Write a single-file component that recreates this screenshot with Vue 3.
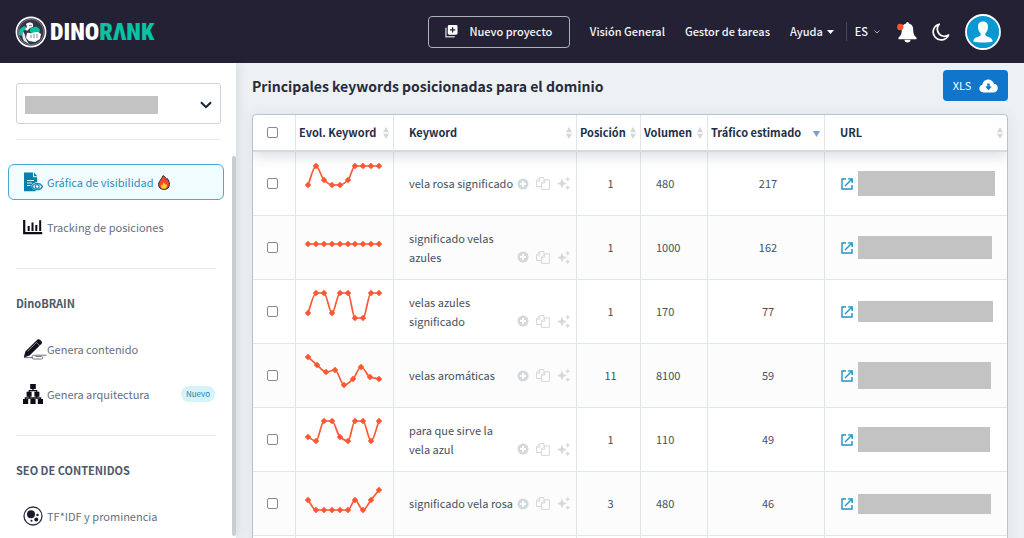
<script setup>
import { ref } from 'vue'

const project = ref('')
const allSelected = ref(false)

const tenSteps = [0, 8, 16, 24, 32, 40, 47, 55, 63, 71]
const nineSteps = [0, 9, 18, 27, 36, 45, 53, 62, 71]

const columns = [
  { key: 'evol', label: 'Evol. Keyword' },
  { key: 'keyword', label: 'Keyword' },
  { key: 'pos', label: 'Posición' },
  { key: 'vol', label: 'Volumen' },
  { key: 'traffic', label: 'Tráfico estimado', sorted: true },
  { key: 'url', label: 'URL' },
]

const rows = [
  { keyword: 'vela rosa significado', pos: 1, vol: 480, traffic: 217, trend: [33, 14, 28, 33, 33, 28, 14, 14, 14, 14], bar: [137, 25] },
  { keyword: 'significado velas azules', pos: 1, vol: 1000, traffic: 162, trend: [28, 28, 28, 28, 28, 28, 28, 28, 28, 28], bar: [134, 23] },
  { keyword: 'velas azules significado', pos: 1, vol: 170, traffic: 77, trend: [33, 13, 13, 33, 13, 13, 38, 38, 13, 13], bar: [135, 21] },
  { keyword: 'velas aromáticas', pos: 11, vol: 8100, traffic: 59, trend: [13, 21, 28, 26, 41, 35, 23, 33, 35], bar: [133, 27] },
  { keyword: 'para que sirve la vela azul', pos: 1, vol: 110, traffic: 49, trend: [29, 33, 13, 13, 29, 33, 13, 13, 33, 13], bar: [132, 25] },
  { keyword: 'significado vela rosa', pos: 3, vol: 480, traffic: 46, trend: [28, 38, 38, 38, 38, 38, 28, 38, 28, 18], bar: [133, 20] },
].map((row) => {
  const xs = row.trend.length === 10 ? tenSteps : nineSteps
  return { ...row, points: row.trend.map((y, i) => ({ x: xs[i] + 12, y })) }
})

// Monotone cubic interpolation, so the curve never overshoots its points.
function curve(p) {
  const slope = (i) => (p[i + 1].y - p[i].y) / (p[i + 1].x - p[i].x)
  const tangent = (i) => {
    if (i === 0) return slope(0)
    if (i === p.length - 1) return slope(i - 1)
    const a = slope(i - 1)
    const b = slope(i)
    return a * b <= 0 ? 0 : (2 * a * b) / (a + b)
  }
  let d = `M${p[0].x} ${p[0].y}`
  for (let i = 0; i < p.length - 1; i++) {
    const h = (p[i + 1].x - p[i].x) / 3
    d += `C${p[i].x + h} ${p[i].y + tangent(i) * h} ${p[i + 1].x - h} ${p[i + 1].y - tangent(i + 1) * h} ${p[i + 1].x} ${p[i + 1].y}`
  }
  return d
}

const diamonds = (p) => p.map(({ x, y }) => `M${x - 3} ${y}L${x} ${y - 3}L${x + 3} ${y}L${x} ${y + 3}Z`).join('')
</script>

<template>
  <div class="page">
    <header class="topbar">
      <a class="brand" href="#" aria-label="DinoRank">
        <svg class="brand-mark" viewBox="0 0 32 32" aria-hidden="true">
          <circle cx="16" cy="16" r="14.6" fill="#343447" stroke="#fff" stroke-width="1.6" />
          <circle cx="16" cy="16" r="12.800" fill="none" stroke="#8d919c" stroke-width=".7" />
          <path d="M4 19c-1-5 2-8 6-9l2 3-4 2-1 5z" fill="#09c2a2" />
          <path d="M15 13c2-2 3-1 4-2 3-1 5 1 6 3l-1 3-6 1-3-2z" fill="#09c2a2" />
          <path d="M11 8c2-2 6-2 7 0v3l-3 1-3 3-2-2 2-2z" fill="#f3f5f6" />
          <path d="M12 17c2-1 3 1 5 0s4-1 6-1l3 2-1 5-5 3-6-1-3-3z" fill="#fff" />
          <path d="M8 15c-1 4-1 7 1 10l5 3c-2-3-4-6-4-9z" fill="#e4e8ea" />
          <path d="M16 19v3m3-4v4m3-4v4M14 9.500h3" stroke="#6a6c7a" stroke-width=".8" fill="none" />
        </svg>
        <span class="brand-name">DINO<span class="brand-accent">RΛNK</span></span>
      </a>

      <nav class="topnav" aria-label="Principal">
        <button class="new-project" type="button">
          <svg width="13" height="13" viewBox="0 0 14 14" aria-hidden="true">
            <path d="M1 3v9.600h9.500" fill="none" stroke="#b9c0c8" stroke-width="1.600" />
            <rect x="3" y="0" width="10.500" height="10.500" rx="1.500" fill="#fff" />
            <path d="M8.200 2.400v5.800M5.300 5.300h5.800" stroke="#232133" stroke-width="1.400" />
          </svg>
          Nuevo proyecto
        </button>
        <a href="#">Visión General</a>
        <a href="#">Gestor de tareas</a>
        <a class="help" href="#">Ayuda
          <svg width="7" height="4" viewBox="0 0 7 4" aria-hidden="true"><path d="M0 0h7L3.500 4z" fill="#fff" /></svg>
        </a>
      </nav>

      <button class="lang" type="button">ES
        <svg width="6" height="4" viewBox="0 0 6 4" aria-hidden="true"><path d="M.5.500 3 3 5.500.500" fill="none" stroke="#a9b1bb" /></svg>
      </button>
      <button class="icon-btn" type="button" aria-label="Notificaciones">
        <svg width="20" height="22" viewBox="0 0 20 22" aria-hidden="true">
          <path d="M10.500 1c.8 0 1.300.6 1.300 1.400 3 .7 4.400 3 4.400 5.800 0 4.300.8 6.200 3.300 8.400v1.600H1.500v-1.600c2.500-2.200 3.300-4.100 3.300-8.400 0-2.800 1.400-5.100 4.400-5.800C9.200 1.600 9.700 1 10.500 1z" fill="#fff" />
          <path d="M7.500 18.800h6a3 2.600 0 0 1-6 0z" fill="#fff" />
          <circle cx="3.300" cy="6" r="3.200" fill="#ff5630" />
        </svg>
      </button>
      <button class="icon-btn moon" type="button" aria-label="Modo oscuro">
        <svg width="18" height="18" viewBox="0 0 18 18" aria-hidden="true">
          <path d="M7.200 1.200A8 8 0 1 0 16.600 12 7.200 7.200 0 0 1 7.200 1.200z" fill="none" stroke="#fff" stroke-width="1.700" stroke-linejoin="round" />
        </svg>
      </button>
      <button class="icon-btn" type="button" aria-label="Perfil">
        <svg width="36" height="36" viewBox="0 0 36 36" aria-hidden="true">
          <circle cx="18" cy="18" r="17" fill="#0699d2" stroke="#fff" stroke-width="1.800" />
          <path d="M18 7.500c3.600 0 5.200 2.300 5 5.800-.1 2.600-1.200 4.700-2.600 6v2c.6 1.600 7 1.400 7.300 6.200-5 1.400-14.400 1.400-19.400 0 .3-4.800 6.700-4.600 7.300-6.200v-2c-1.400-1.300-2.500-3.400-2.600-6-.2-3.500 1.400-5.800 5-5.800z" fill="#fff" />
        </svg>
      </button>
    </header>

    <div class="body">
      <aside class="sidebar">
        <div class="project">
          <select v-model="project" aria-label="Proyecto"><option value=""></option></select>
          <span class="project-mask"></span>
          <svg class="project-caret" width="12" height="8" viewBox="0 0 12 8" aria-hidden="true">
            <path d="M1 1.200l5 5 5-5" fill="none" stroke="#14213a" stroke-width="2" />
          </svg>
        </div>
        <hr class="rule wide" />
        <div class="menu">
          <a class="item active" href="#">
            <svg width="20" height="20" viewBox="0 0 20 20" aria-hidden="true">
              <path d="M1 .5h9v4.800h4.200V10c-3 .2-5 1.800-6 4.300.7 2 2.400 3.600 4.600 4.200v.7H1z" fill="#0b7fa8" />
              <path d="M11 .5l3.300 3.800H11z" fill="#0b7fa8" />
              <path d="M4 8.500h7M4 11h5M4 13.500h3.500" stroke="#d7f1fa" stroke-width="1.100" />
              <path d="M9 14.600c2.400-4.200 8-4.200 10.500 0-2.500 4.200-8.100 4.200-10.500 0z" fill="#f0fbff" stroke="#2187b5" stroke-width="1.200" />
              <circle cx="14.200" cy="14.600" r="1.900" fill="#f0fbff" stroke="#2187b5" stroke-width="1.200" />
            </svg>
            <span>Gráfica de visibilidad</span>
            <svg class="fire" width="12" height="15" viewBox="0 0 12 15" aria-hidden="true">
              <path d="M5 .7C7.500 1.500 8 3.300 8.300 4.500l.9-1c1.400 1.600 2.200 4 2.200 6 0 3-2 4.900-5.400 4.900S.6 12.500.6 9.500c0-2.700 1.800-4 2.700-5.600C3.900 2.900 4.600 2 5 .7z" fill="#f4472c" stroke="#2f2430" />
              <path d="M5.600 7c.3 1.500 1.600 1.700 1.900 2.800l1-.8c.9 2.600-.2 4.800-2.500 4.800-2.600 0-3.600-2.300-2.400-4.400l.8.8c.2-1.200.8-2 1.200-3.200z" fill="#ffd21f" />
            </svg>
          </a>
          <a class="item" href="#">
            <svg width="20" height="20" viewBox="0 0 20 20" aria-hidden="true">
              <path d="M1.200 3v13.200h18" fill="none" stroke="#0d0d18" stroke-width="2.200" />
              <path d="M5.700 9v5M9.500 5.500V14M13.300 8v6M17.200 3.200V14" stroke="#0d0d18" stroke-width="2" />
            </svg>
            <span>Tracking de posiciones</span>
          </a>
        </div>
        <hr class="rule" />
        <h2>DinoBRAIN</h2>
        <div class="menu">
          <a class="item" href="#">
            <svg class="pencil" width="24" height="22" viewBox="0 0 24 22" aria-hidden="true">
              <path d="M.8 19.500l1.500-6L14.500 1.600c1.500-1.500 5.600 2 4.300 4L6.600 17.500z" fill="#11111c" />
              <path d="M13 4l4 4M4.500 13.500l8.500-8.600" stroke="#aeb4c0" stroke-width=".7" />
              <path d="M1 19.600h9M10.500 17.200H23.500M10.500 17.200c-2 0-2 3.800 0 3.800h8c1.800 0 1.800-2.500 0-2.500h-6" fill="none" stroke="#5d6470" stroke-width=".9" />
            </svg>
            <span>Genera contenido</span>
          </a>
          <a class="item" href="#">
            <svg width="20" height="20" viewBox="0 0 20 20" aria-hidden="true">
              <path d="M7.200 0h5.600v5H7.200zM3.600 7.800h5v5h-5zM11.400 7.800h5v5h-5zM0 15h5.200v5H0zM7.400 15h5.200v5H7.400zM14.800 15H20v5h-5.200z" fill="#0d0d18" />
              <path d="M10 4.500v2.200M6.300 8.500V6.700h7.400v1.800M6.300 12v2M2.400 16v-2h15.200v2M13.700 12v2M10 14v2" fill="none" stroke="#0d0d18" stroke-width="1.300" />
            </svg>
            <span>Genera arquitectura</span>
            <span class="badge">Nuevo</span>
          </a>
        </div>
        <hr class="rule" />
        <h2>SEO DE CONTENIDOS</h2>
        <div class="menu">
          <a class="item" href="#">
            <svg width="20" height="20" viewBox="0 0 20 20" aria-hidden="true">
              <circle cx="10" cy="10" r="9" fill="none" stroke="#2b3348" stroke-width="1.300" />
              <circle cx="8" cy="8.300" r="4" fill="#1b1b2c" />
              <circle cx="14.500" cy="9" r="1.200" fill="#1b1b2c" />
              <circle cx="13.300" cy="13.500" r="2" fill="#1b1b2c" />
              <circle cx="8.500" cy="14.800" r="1" fill="#1b1b2c" />
            </svg>
            <span>TF*IDF y prominencia</span>
          </a>
        </div>
        <span class="scroll-thumb"></span>
      </aside>

      <main class="content">
        <div class="title-row">
          <h1>Principales keywords posicionadas para el dominio</h1>
          <button class="xls" type="button">XLS
            <svg width="19" height="14" viewBox="0 0 19 14" aria-hidden="true">
              <path d="M4.600 13.500C2 13.500.3 11.800.3 9.600c0-2 1.300-3.500 3.100-3.900C3.700 2.700 6.200.5 9.200.5c2.700 0 5 1.700 5.800 4.200 2.200.2 3.800 2 3.800 4.300 0 2.500-2 4.500-4.500 4.500z" fill="#fff" />
              <path d="M8.300 4.500h2.400v3h2.100l-3.300 3.700-3.300-3.700h2.100z" fill="#1076cc" />
            </svg>
          </button>
        </div>

        <div class="table-card">
          <table>
            <colgroup>
              <col class="c-check" /><col class="c-evol" /><col class="c-keyword" /><col class="c-pos" />
              <col class="c-vol" /><col class="c-traffic" /><col />
            </colgroup>
            <thead>
              <tr>
                <th class="check"><input v-model="allSelected" type="checkbox" aria-label="Seleccionar todo" /></th>
                <th v-for="col in columns" :key="col.key" :class="col.key">
                  <div class="th">
                    <span>{{ col.label }}</span>
                    <svg v-if="col.sorted" class="sorted" width="7" height="6" viewBox="0 0 7 6" aria-hidden="true"><path d="M0 0h7L3.500 6z" fill="#7c9ccb" /></svg>
                    <svg v-else width="6" height="12" viewBox="0 0 6 12" aria-hidden="true"><path d="M0 5.300h6L3 0zM0 6.700h6L3 12z" fill="#d3d6da" /></svg>
                  </div>
                </th>
              </tr>
            </thead>
            <tbody>
              <tr v-for="row in rows" :key="row.keyword">
                <td class="check"><input type="checkbox" :checked="allSelected" :aria-label="row.keyword" /></td>
                <td class="evol">
                  <svg width="96" height="56" viewBox="0 0 96 56" aria-hidden="true">
                    <path :d="curve(row.points)" fill="none" stroke="#ff5733" stroke-width="1.700" />
                    <path :d="diamonds(row.points)" fill="#ff5733" stroke="#ff5733" stroke-width=".5" />
                  </svg>
                </td>
                <td class="keyword">
                  <div class="kw">
                    <span class="kw-text">{{ row.keyword }}</span>
                    <button type="button" aria-label="Añadir">
                      <svg width="12" height="12" viewBox="0 0 12 12" aria-hidden="true">
                        <circle cx="6" cy="6" r="5.500" fill="#d3d8dd" /><path d="M6 3v6M3 6h6" stroke="#fff" stroke-width="1.800" />
                      </svg>
                    </button>
                    <button type="button" aria-label="Copiar">
                      <svg width="14" height="13" viewBox="0 0 14 13" aria-hidden="true">
                        <path d="M5.500 9.500h-5V4L3.700.6h4.200V3M.5 4h3.200V.6" fill="none" stroke="#d3d8dd" />
                        <path d="M5.600 6L8.800 2.800h4.600v9.600H5.600zM5.600 6h3.200V2.800" fill="none" stroke="#d3d8dd" />
                      </svg>
                    </button>
                    <button type="button" aria-label="Sugerencias">
                      <svg width="13" height="13" viewBox="0 0 13 13" aria-hidden="true">
                        <path d="M5 2l1.300 3.200L9.500 6.500 6.300 7.800 5 11 3.700 7.800.5 6.500l3.200-1.300zM10.700 0l.6 1.600 1.600.6-1.600.6-.6 1.600-.6-1.600-1.600-.6 1.600-.6zM10.700 8.500l.6 1.600 1.600.6-1.600.6-.6 1.600-.6-1.600-1.600-.6 1.600-.6z" fill="#d3d8dd" stroke="#d3d8dd" stroke-width=".4" />
                      </svg>
                    </button>
                  </div>
                </td>
                <td class="pos">{{ row.pos }}</td>
                <td class="vol">{{ row.vol }}</td>
                <td class="traffic">{{ row.traffic }}</td>
                <td class="url">
                  <a class="link" href="#" aria-label="Abrir URL">
                    <svg width="12" height="12" viewBox="0 0 12 12" aria-hidden="true">
                      <path d="M5 1H1v10h10V7" fill="none" stroke="#2590c8" stroke-width="1.400" />
                      <path d="M7 .9h4.200V5M11 1L4 8" fill="none" stroke="#2590c8" stroke-width="1.400" />
                    </svg>
                    <span class="mask" :style="{ width: row.bar[0] + 'px', height: row.bar[1] + 'px' }"></span>
                  </a>
                </td>
              </tr>
              <tr aria-hidden="true"><td v-for="n in 7" :key="n"></td></tr>
            </tbody>
          </table>
        </div>
      </main>
    </div>
  </div>
</template>

<style>
body {
  background: #edf1f4;
}
</style>

<style scoped>
.page {
  height: 100vh;
  overflow: hidden;
  display: flex;
  flex-direction: column;
  font: 400 11px/19px "Noto Sans CJK SC", "Open Sans", sans-serif;
  color: #46505f;
}
* {
  box-sizing: border-box;
}
a {
  color: inherit;
  text-decoration: none;
}
button {
  font: inherit;
  color: inherit;
  background: none;
  border: 0;
  padding: 0;
  cursor: pointer;
}
svg {
  display: block;
  flex: none;
}
.topbar {
  flex: none;
  height: 63px;
  background: #232133;
  color: #f3f5f7;
  display: flex;
  align-items: center;
  padding: 0 23px 0 15px;
  font-weight: 500;
  white-space: nowrap;
}
.brand {
  display: flex;
  align-items: center;
  gap: 3px;
  margin-right: auto;
}
.brand-mark {
  width: 32px;
  height: 32px;
}
.brand-name {
  font: 900 24px/32px "Roboto Condensed", Roboto, sans-serif;
  color: #fff;
}
.brand-accent {
  color: #09c2a2;
}
.topnav {
  display: flex;
  align-items: center;
  gap: 20px;
}
.new-project {
  display: flex;
  align-items: center;
  justify-content: center;
  gap: 11px;
  width: 142px;
  height: 32px;
  border: 1px solid #aab1b9;
  border-radius: 4px;
}
.help,
.lang {
  display: flex;
  align-items: center;
  gap: 4px;
}
.lang {
  gap: 6px;
  margin: 0 17px 0 12px;
  padding-left: 8px;
  border-left: 1px solid #454557;
}
.moon {
  margin: 0 15px;
}
.body {
  flex: 1;
  min-height: 0;
  display: flex;
}
.sidebar {
  position: relative;
  flex: none;
  width: 236px;
  padding: 20px 16px 0;
  background: #fff;
  box-shadow: 2px 0 10px rgba(40, 60, 80, 0.12);
  color: #667080;
}
.project {
  position: relative;
  width: 205px;
}
.project select {
  display: block;
  width: 100%;
  height: 41px;
  appearance: none;
  background: #fff;
  border: 1px solid #ccd3d8;
  border-radius: 3px;
}
.project-mask {
  position: absolute;
  left: 9px;
  top: 13px;
  width: 133px;
  height: 18px;
  background: #c3c3c3;
  pointer-events: none;
}
.project-caret {
  position: absolute;
  right: 9px;
  top: 18px;
  pointer-events: none;
}
.rule {
  height: 1px;
  margin: 23px 4px 24px 0;
  border: 0;
  background: #e3e7ea;
}
.rule.wide {
  margin: 15px 0 24px;
}
h2 {
  margin: 0 0 18px;
  font-size: 11px;
  line-height: 20px;
  font-weight: 700;
  color: #4d5868;
}
.menu {
  display: flex;
  flex-direction: column;
  gap: 9px;
  margin: 0 -4px 0 -8px;
}
.item {
  display: flex;
  align-items: center;
  gap: 4px;
  height: 36px;
  padding: 0 8px 0 14px;
  border: 1px solid transparent;
  border-radius: 6px;
  white-space: nowrap;
}
.item.active {
  color: #2b90bd;
  background: #f0fcff;
  border-color: #4ba8d1;
}
.pencil {
  margin-right: -4px;
}
.badge {
  margin-left: auto;
  padding: 0 5px;
  border-radius: 8px;
  background: #d6f2fa;
  color: #2385ad;
  font-size: 8px;
  line-height: 16px;
}
.scroll-thumb {
  position: absolute;
  right: 0;
  top: 93px;
  bottom: 2px;
  width: 4px;
  border-radius: 2px;
  background: #c9ccd0;
}
.content {
  flex: 1;
  min-width: 0;
  padding: 7px 16px 0;
}
.title-row {
  display: flex;
  align-items: center;
  justify-content: space-between;
  height: 31px;
  margin-bottom: 13px;
}
h1 {
  margin: 0;
  font-size: 14px;
  line-height: 24px;
  font-weight: 700;
  color: #262b3c;
}
.xls {
  display: flex;
  align-items: center;
  justify-content: center;
  gap: 8px;
  width: 65px;
  height: 31px;
  border-radius: 4px;
  background: #1076cc;
  color: #fff;
}
.table-card {
  border: 1px solid #b9c3c9;
  border-radius: 4px;
  background: #fff;
  box-shadow: 0 0 14px rgba(40, 60, 80, 0.08);
  overflow: hidden;
}
table {
  width: 100%;
  table-layout: fixed;
  border-collapse: separate;
  border-spacing: 0;
}
.c-check { width: 43px; }
.c-evol { width: 98px; }
.c-keyword { width: 183px; }
.c-pos { width: 64px; }
.c-vol { width: 67px; }
.c-traffic { width: 117px; }
th,
td {
  padding: 0;
  border-right: 1px solid #e1e6ea;
  text-align: left;
}
th:last-child,
td:last-child {
  border-right: 0;
}
th {
  height: 37px;
  border-bottom: 2px solid #d5dade;
  font-weight: 700;
  color: #1d2f49;
  white-space: nowrap;
}
td {
  height: 64px;
  border-bottom: 1px solid #e1e6ea;
}
thead tr {
  position: relative;
  box-shadow: 0 4px 14px rgba(40, 60, 80, 0.18);
}
tbody tr:nth-child(even) {
  background: #fcfcfc;
}
th.check,
td.check {
  padding-right: 3px;
}
input[type="checkbox"] {
  display: block;
  appearance: none;
  width: 11px;
  height: 11px;
  margin: 0 auto;
  border: 1px solid #858a90;
  border-radius: 2px;
  background: #fff;
}
input[type="checkbox"]:checked {
  background: #1076cc;
}
.th {
  display: flex;
  align-items: center;
  justify-content: space-between;
  padding: 0 4px 0 3px;
}
.sorted {
  margin-top: 3px;
}
th.keyword .th,
th.url .th {
  padding-left: 15px;
}
td.evol {
  vertical-align: top;
}
.kw {
  display: flex;
  align-items: flex-end;
  gap: 7px;
  padding-left: 15px;
}
.kw-text {
  width: 106px;
  margin-right: -5px;
}
.kw button {
  height: 19px;
  display: flex;
  align-items: center;
}
td.pos {
  padding-left: 4px;
  text-align: center;
}
td.vol {
  padding-left: 15px;
}
td.traffic {
  padding-left: 4px;
  text-align: center;
}
td.url {
  padding-left: 16px;
}
.link {
  display: flex;
  align-items: center;
  gap: 5px;
}
.mask {
  background: #c3c3c3;
}
</style>
